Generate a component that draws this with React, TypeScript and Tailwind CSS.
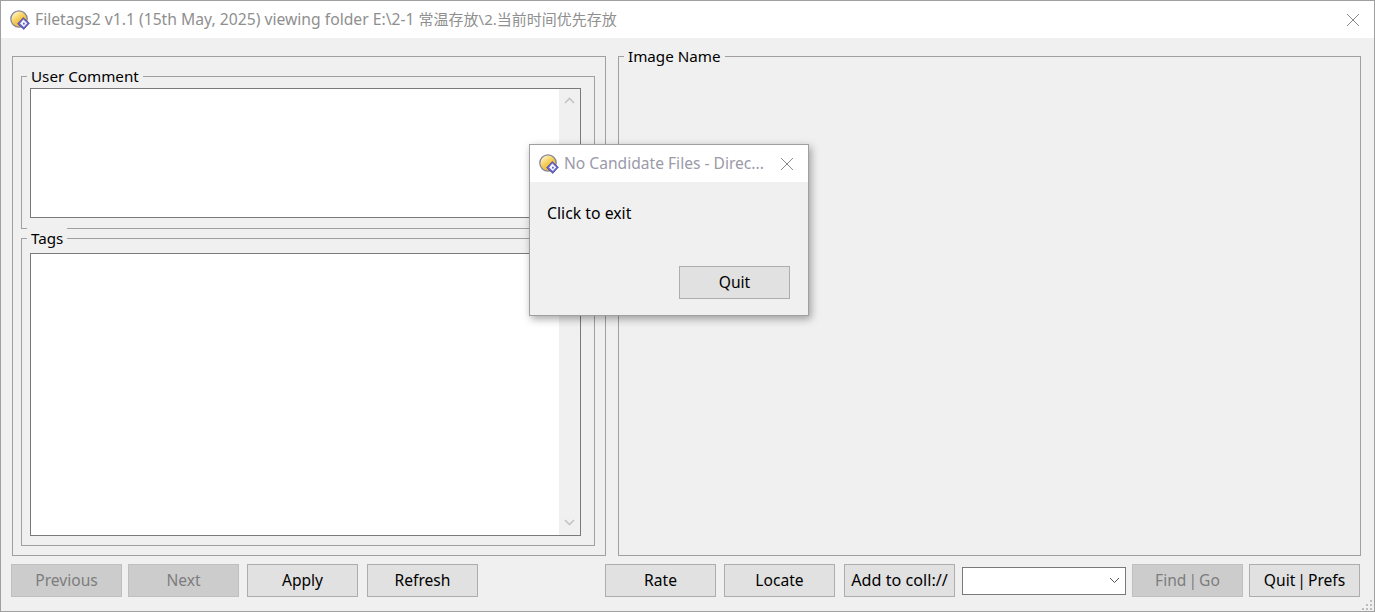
import { ReactNode } from "react";

const font = "font-['Noto_Sans','Noto_Sans_CJK_SC',sans-serif]";

function AppIcon() {
  return (
    <svg width="20" height="20" viewBox="0 0 20 20" className="shrink-0">
      <defs>
        <linearGradient id="ball" x1="0.2" y1="0.1" x2="0.8" y2="0.9">
          <stop offset="0" stopColor="#fff3c4" />
          <stop offset="0.45" stopColor="#f6cf5a" />
          <stop offset="1" stopColor="#e9a92f" />
        </linearGradient>
      </defs>
      <circle cx="9" cy="9" r="8.2" fill="url(#ball)" stroke="#85879c" strokeWidth="1.3" />
      <path d="M13.2 7.6L19.4 13.2 13.8 19.4 7.6 13.8Z" fill="#6a66c8" stroke="#45418f" strokeWidth="0.7" />
      <path d="M13.3 9.6L17.2 13.2 13.9 17 10 13.5Z" fill="#f4f4ff" />
      <rect x="13" y="12.8" width="1.7" height="1.7" fill="#5b57c4" />
    </svg>
  );
}

function CloseIcon() {
  return (
    <svg width="14" height="14" viewBox="0 0 14 14" className="shrink-0">
      <path d="M1 1L13 13M13 1L1 13" stroke="#8a8a8a" strokeWidth="1" fill="none" />
    </svg>
  );
}

function Chevron({ down }: { down?: boolean }) {
  return (
    <svg width="11" height="7" viewBox="0 0 11 7">
      <path d={down ? "M1 1L5.5 5.5 10 1" : "M1 6L5.5 1.5 10 6"} stroke="#c4c4c4" strokeWidth="1.6" fill="none" />
    </svg>
  );
}

function GroupLabel({ children }: { children: ReactNode }) {
  return (
    <span className="absolute left-[5px] top-[-11px] bg-[#f0f0f0] px-1 text-[15.2px] leading-[20px] text-black">
      {children}
    </span>
  );
}

function TextBox({ className }: { className: string }) {
  return (
    <div className={`flex w-[551px] justify-end border border-[#7a7a7a] bg-white ${className}`}>
      <div className="flex w-[21px] flex-col items-center justify-between bg-[#f0f0f0] pb-[9px] pt-[8px]">
        <Chevron />
        <Chevron down />
      </div>
    </div>
  );
}

function Btn({ label, disabled, className = "text-[15.6px]" }: { label: string; disabled?: boolean; className?: string }) {
  return (
    <button
      className={`h-[33px] w-[111px] shrink-0 border ${className} ${
        disabled
          ? "border-[#bfbfbf] bg-[#cccccc] text-[#7d7d7d]"
          : "border-[#adadad] bg-[#e1e1e1] text-black"
      }`}
    >
      {label}
    </button>
  );
}

export default function App() {
  return (
    <div className={`relative flex h-[612px] w-[1375px] flex-col overflow-hidden border border-[#a0a0a0] bg-[#f0f0f0] ${font}`}>
      <div className="flex h-[37px] shrink-0 items-center bg-white pl-[9px] pr-[14px]">
        <AppIcon />
        <span className="ml-[5px] text-[15.7px] text-[#8f8f8f]">
          Filetags2 v1.1 (15th May, 2025) viewing folder E:\2-1 <span className="text-[15px]">常温存放\2.当前时间优先存放</span>
        </span>
        <span className="ml-auto">
          <CloseIcon />
        </span>
      </div>

      <div className="ml-[11px] mt-[18px] flex h-[500px] w-[1350px] gap-[12px]">
        <div className="flex w-[594px] flex-col gap-[9px] border border-[#a0a0a0] pb-[9px] pl-[8px] pr-[10px] pt-[19px]">
          <div className="relative h-[153px] border border-[#a0a0a0] px-[8px] pb-[10px] pt-[11px]">
            <GroupLabel>User Comment</GroupLabel>
            <TextBox className="h-[130px]" />
          </div>
          <div className="relative h-[308px] border border-[#a0a0a0] px-[8px] pb-[9px] pt-[14px]">
            <GroupLabel>Tags</GroupLabel>
            <TextBox className="h-[283px]" />
          </div>
        </div>
        <div className="relative w-[743px] border border-[#a0a0a0]">
          <GroupLabel>Image Name</GroupLabel>
        </div>
      </div>

      <div className="ml-[10px] mt-[8px] flex w-[1350px] items-center">
        <Btn label="Previous" disabled />
        <div className="ml-[6px]"><Btn label="Next" disabled /></div>
        <div className="ml-[8px]"><Btn label="Apply" /></div>
        <div className="ml-[9px]"><Btn label="Refresh" /></div>
        <div className="ml-[127px]"><Btn label="Rate" /></div>
        <div className="ml-[8px]"><Btn label="Locate" /></div>
        <div className="ml-[9px]"><Btn label="Add to coll://" className="text-[16.2px]" /></div>
        <div className="ml-[7px] flex h-[28px] w-[164px] shrink-0 items-center justify-end border border-[#7a7a7a] bg-white pr-[5px]">
          <svg width="11" height="7" viewBox="0 0 11 7">
            <path d="M1 1L5.5 5.5 10 1" stroke="#555" strokeWidth="1" fill="none" />
          </svg>
        </div>
        <div className="ml-[6px]"><Btn label="Find | Go" disabled className="text-[15.6px] [word-spacing:-2px]" /></div>
        <div className="ml-[6px]"><Btn label="Quit | Prefs" className="text-[15.6px] [word-spacing:-2px]" /></div>
      </div>

      <svg width="12" height="12" viewBox="0 0 12 12" className="absolute bottom-0 right-[1px]">
        <path d="M9 1h2v2H9zM5 5h2v2H5zM9 5h2v2H9zM1 9h2v2H1zM5 9h2v2H5zM9 9h2v2H9z" fill="#bdbdbd" />
      </svg>

      <div className="absolute left-[528px] top-[143px] flex h-[172px] w-[280px] flex-col border border-[#a0a0a0] bg-[#f0f0f0] shadow-[2px_3px_8px_rgba(0,0,0,0.35)]">
        <div className="flex h-[37px] shrink-0 items-center bg-white pl-[9px] pr-[14px]">
          <AppIcon />
          <span className="ml-[5px] text-[15.6px] text-[#9a9aa8]">No Candidate Files - Direc...</span>
          <span className="ml-auto">
            <CloseIcon />
          </span>
        </div>
        <div className="ml-[17px] mt-[21px] text-[15.8px] leading-[20px] text-black">Click to exit</div>
        <div className="ml-[149px] mt-[43px]">
          <Btn label="Quit" />
        </div>
      </div>
    </div>
  );
}
